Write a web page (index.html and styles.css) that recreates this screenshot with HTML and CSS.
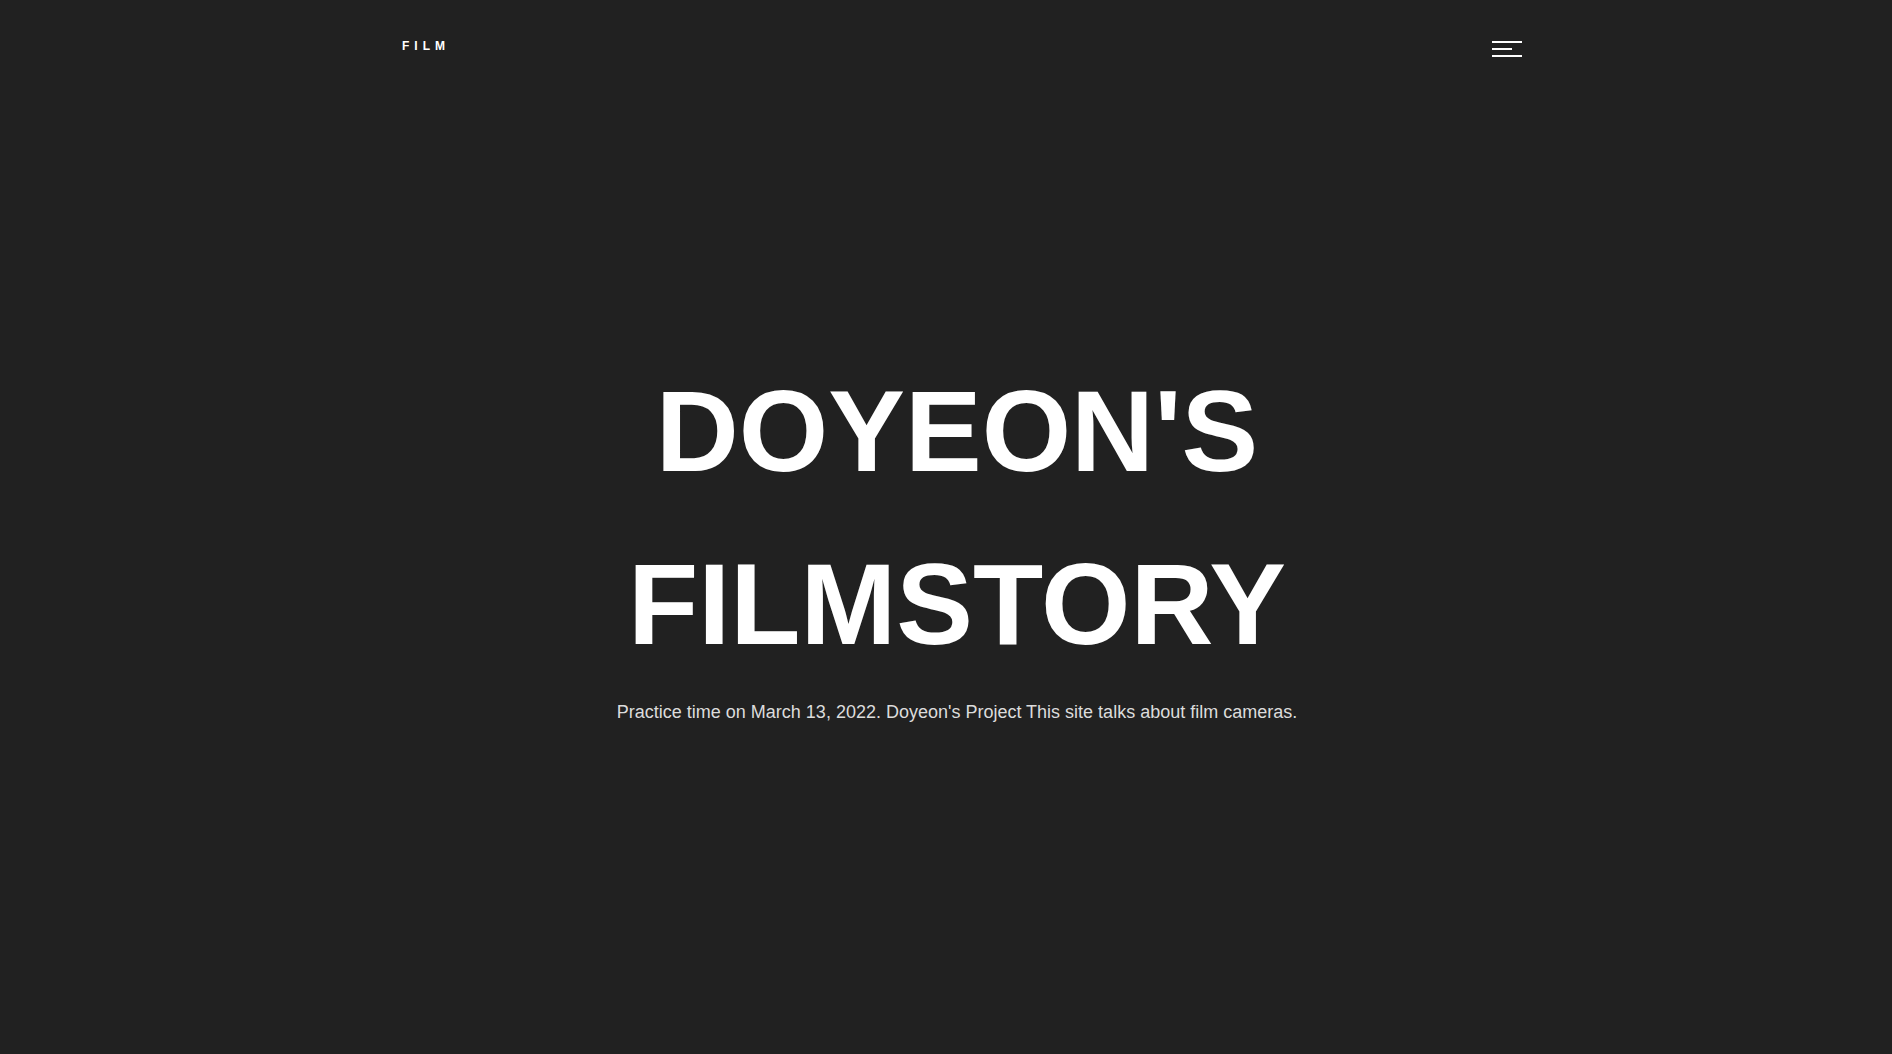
FILE: index.html
```html
<!DOCTYPE html>
<html lang="en">
<head>
<meta charset="utf-8">
<title>FILM</title>
<link rel="stylesheet" href="styles.css">
</head>
<body>
<div class="page">
  <header class="header">
    <a class="logo" href="#">FILM</a>
    <button class="menu" aria-label="menu">
      <span class="bar"></span>
      <span class="bar bar-short"></span>
      <span class="bar"></span>
    </button>
  </header>
  <main class="hero">
    <h1 class="title">DOYEON'S<br>FILMSTORY</h1>
    <p class="lead">Practice time on March 13, 2022. Doyeon's Project This site talks about film cameras.</p>
  </main>
</div>
</body>
</html>
```
FILE: styles.css
```css
* { box-sizing: border-box; }
html, body {
  margin: 0;
  padding: 0;
  height: 100%;
  background: #212121;
}
body {
  font-family: "Liberation Sans", Arial, sans-serif;
  color: #fff;
  overflow: hidden;
}
.page {
  width: 1152px;
  margin: 0 auto;
  padding-left: 32px;
}
.header {
  height: 90px;
  display: flex;
  justify-content: space-between;
  align-items: flex-start;
}
.logo {
  margin-top: 39px;
  font-size: 12px;
  line-height: 14px;
  font-weight: 700;
  letter-spacing: 5px;
  color: #fff;
  text-decoration: none;
}
.menu {
  margin-top: 41px;
  padding: 0;
  border: 0;
  background: none;
  width: 30px;
  display: flex;
  flex-direction: column;
  gap: 5px;
  cursor: pointer;
}
.bar {
  display: block;
  width: 30px;
  height: 2px;
  background: #fff;
}
.bar-short { width: 20px; }
.hero {
  padding-top: 255px;
  padding-right: 10px;
  text-align: center;
}
.title {
  margin: 0;
  font-size: 115px;
  line-height: 1.5;
  font-weight: 700;
  color: #fff;
}
.lead {
  margin: 12px 0 0;
  font-size: 18px;
  color: #dcdcdc;
}
```
